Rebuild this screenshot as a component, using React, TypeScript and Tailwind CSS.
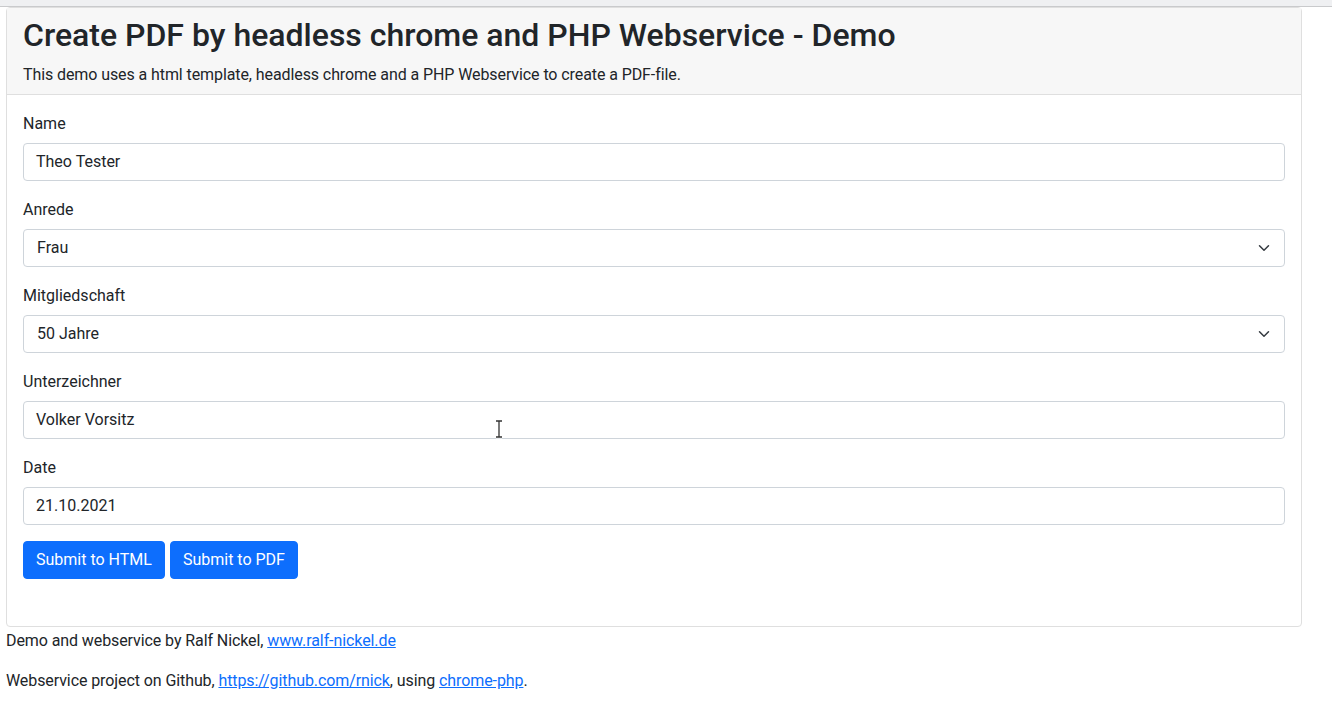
import React from "react";

const Chevron = () => (
  <svg
    className="pointer-events-none absolute right-[14px] top-1/2 -translate-y-1/2"
    width="12"
    height="12"
    viewBox="0 0 16 16"
  >
    <path d="M2 5l6 6 6-6" fill="none" stroke="#343a40" strokeWidth="2" strokeLinecap="round" strokeLinejoin="round" />
  </svg>
);

const Field = ({ label, value, select }: { label: string; value: string; select?: boolean }) => (
  <div className="mb-4">
    <div className="mb-[7px] pt-px leading-6">{label}</div>
    <div className="relative h-[38px] rounded border border-[#ced4da] bg-white pl-3 pr-9 leading-[36px]">
      <span className={select ? "pl-px" : ""}>{value}</span>
      {select && <Chevron />}
    </div>
  </div>
);

export default function App() {
  return (
    <div
      className="min-h-[708px] bg-white text-base text-[#212529]"
      style={{ fontFamily: "Roboto, 'Liberation Sans', sans-serif" }}
    >
      <div className="h-[7px] border-b border-[#c9cacc] bg-[#eff0f2]" />
      <div className="ml-[6px] w-[1296px] rounded border border-[#dfdfdf]">
        <div className="border-b border-[#dfdfdf] bg-[#f7f7f7] px-4 pt-2 pb-[7px]">
          <h2 className="mb-[9px] text-[32px] font-medium leading-[1.2]">
            Create PDF by headless chrome and PHP Webservice - Demo
          </h2>
          <p className="leading-6 tracking-[-0.09px]">
            This demo uses a html template, headless chrome and a PHP Webservice to create a PDF-file.
          </p>
        </div>
        <div className="relative px-4 pt-4 pb-[47px]">
          <Field label="Name" value="Theo Tester" />
          <Field label="Anrede" value="Frau" select />
          <Field label="Mitgliedschaft" value="50 Jahre" select />
          <Field label="Unterzeichner" value="Volker Vorsitz" />
          <Field label="Date" value="21.10.2021" />
          <div className="flex gap-[5px]">
            <button className="h-[38px] rounded border border-[#0d6efd] bg-[#0d6efd] px-3 leading-6 text-white">
              Submit to HTML
            </button>
            <button className="h-[38px] rounded border border-[#0d6efd] bg-[#0d6efd] px-3 leading-6 text-white">
              Submit to PDF
            </button>
          </div>
          <svg className="absolute left-[485px] top-[324px]" width="14" height="20" viewBox="0 0 14 20">
            <path d="M4 2h6M7 2v16M4 18h6" fill="none" stroke="#fff" strokeWidth="3" />
            <path d="M4 2h6M7 2v16M4 18h6" fill="none" stroke="#333" strokeWidth="1.3" />
          </svg>
        </div>
      </div>
      <div className="pl-[6px] pt-[2px] leading-6 tracking-[-0.09px]">
        <p className="mb-4">
          Demo and webservice by Ralf Nickel,{" "}
          <a className="text-[#0d6efd] underline">www.ralf-nickel.de</a>
        </p>
        <p className="mb-4">
          Webservice project on Github, <a className="text-[#0d6efd] underline">https://github.com/rnick</a>, using{" "}
          <a className="text-[#0d6efd] underline">chrome-php</a>.
        </p>
      </div>
    </div>
  );
}
